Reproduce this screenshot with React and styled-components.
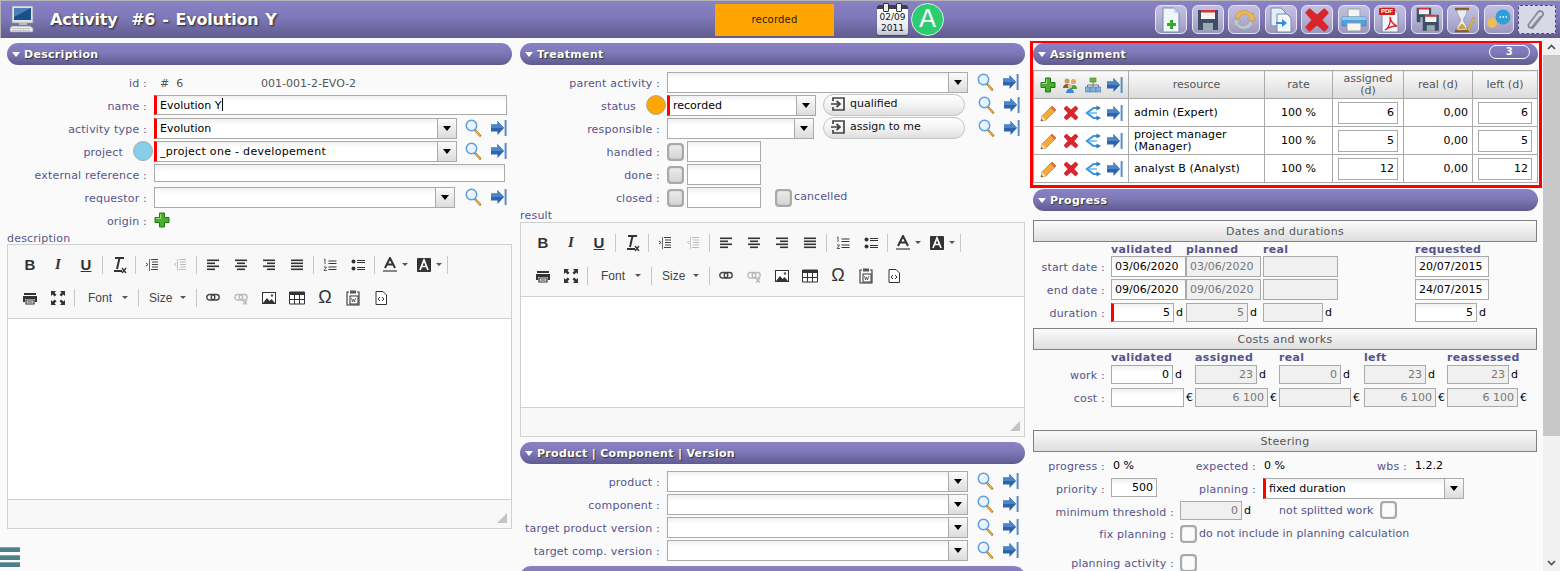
import React from "react";
import styled, { createGlobalStyle } from "styled-components";

const Global = createGlobalStyle`
  html, body { margin: 0; padding: 0; height: 100%; overflow: hidden; background: #fafafa; }
  * { box-sizing: border-box; }
  body { font-family: "DejaVu Sans", Verdana, sans-serif; font-size: 11px; color: #000; }
`;

const LABEL = "#55548a";
const BORDER = "#aaaaaa";
const purple = "linear-gradient(#8a81c6 0%, #7f78b8 45%, #5f5b8e 100%)";

const Page = styled.div`position: relative; width: 1560px; height: 571px; overflow: hidden; background: #fafafa;`;
const TopBar = styled.header`
  height: 38px; border-top: 1px solid #b5b5b5; border-left: 1px solid #b5b5b5; background: ${purple};
  display: flex; align-items: center; padding-left: 8px; position: relative;
`;
const Title = styled.h1`
  margin: 0 0 0 14px; width: 665px; color: #fff; font-size: 16px; font-weight: bold; white-space: pre;
  letter-spacing: -0.2px; word-spacing: 1.5px; text-shadow: 1px 1px 2px #222;
`;
const StatusBox = styled.div`
  width: 119px; height: 32px; background: #ffa500; color: #222; font-size: 10px;
  display: flex; align-items: center; justify-content: center; letter-spacing: .2px;
`;
const Calendar = styled.div`
  margin-left: 43px; width: 31px; height: 30px; position: relative; border-radius: 3px 3px 2px 2px; overflow: visible;
  background: linear-gradient(#fff, #e8eaf2 70%, #c0c4d0); border-top: 4px solid #3c3c4c;
  font-size: 9px; line-height: 11px; text-align: center; color: #112; padding-top: 3px; box-shadow: 0 1px 1px #444;
  &::before, &::after { content: ""; position: absolute; top: -6px; width: 4px; height: 7px; background: #eee; border: 1px solid #333; border-radius: 1px; }
  &::before { left: 6px; } &::after { right: 6px; }
`;
const Avatar = styled.div`
  margin-left: 3px; width: 33px; height: 33px; border-radius: 50%; background: #2ecc71; border: 1px solid #d8f5e4;
  color: #fff; font-size: 25px; line-height: 30px; text-align: center;
`;
const ToolRow = styled.div`margin-left: 211px; display: flex; gap: 4.5px; align-items: center;`;
const ToolButton = styled.div`
  width: ${p => p.$w || 32}px; height: 29px; border-radius: 6px; border: 1px solid #e6e6f2;
  background: linear-gradient(rgba(255,255,255,.5), rgba(255,255,255,.34));
  display: flex; align-items: center; justify-content: center;
`;
const ClipButton = styled(ToolButton)`
  border: 1px dashed #4a4a70; border-radius: 2px; background: #d9d8e6;
`;

const Main = styled.main`display: flex; height: 533px;`;
const Columns = styled.div`display: flex; gap: 8px; padding: 5px 0 0 7px; width: 1543px; align-items: flex-start;`;
const Column = styled.section`width: 505px; flex: none;`;
const Scrollbar = styled.div`
  width: 17px; height: 533px; background: #f1f1f1; display: flex; flex-direction: column; flex: none;
`;
const ScrollCap = styled.div`height: 17px; display: flex; align-items: center; justify-content: center; color: #505050; background: #f1f1f1;`;
const ScrollThumb = styled.div`height: 381px; background: #c8c8c8;`;
const ScrollTrack = styled.div`flex: 1;`;

const SectionHead = styled.div`
  height: 22px; border-radius: 11px; background: ${purple}; display: flex; align-items: center; padding: 0 8px 0 5px;
  color: #fff; font-weight: bold; font-size: 11px; letter-spacing: .3px; text-shadow: 1px 1px 1px #333; width: ${p => p.$w || 505}px;
`;
const SpacedHead = styled(SectionHead)`margin-top: ${p => p.$mt}px;`;
const Caret = styled.span`
  width: 0; height: 0; border: 4px solid transparent; border-top: 5px solid #fff; border-bottom: 0; margin: 0 4px 0 0;
`;
const Badge = styled.span`
  margin-left: auto; width: 41px; height: 14px; border: 1px solid #fff; border-radius: 7px; text-align: center;
  font-size: 10px; line-height: 11px; text-shadow: none; margin-top: -4px;
`;
const Form = styled.div`padding-top: 7px;`;
const Row = styled.div`display: flex; align-items: flex-start; height: 23px;`;
const Label = styled.div`
  width: ${p => p.$w || 140}px; flex: none; text-align: right; color: ${LABEL}; line-height: ${p => p.$lh || 23}px; white-space: nowrap; letter-spacing: .2px;
  margin-right: ${p => p.$gap ?? 7}px;
`;
const Value = styled.div`
  color: ${p => p.$muted ? "#555" : "#000"}; line-height: ${p => p.$lh || 23}px; width: ${p => p.$w}px; flex: none; white-space: pre;
  padding-left: ${p => p.$pl ?? 2}px;
`;
const OriginValue = styled.div`padding-top: 2px;`;
const Field = styled.div`
  width: ${p => p.$w}px; height: ${p => p.$h || 20}px; flex: none; border: 1px solid ${BORDER};
  border-left: ${p => p.$req ? "3px solid #f00" : `1px solid ${BORDER}`};
  background: ${p => p.$ro ? "#f0f0f0" : "linear-gradient(#f0f0f0 0, #fff 6px)"}; color: ${p => p.$ro ? "#777" : "#000"};
  padding: 0 3px; line-height: ${p => (p.$h || 20) - 1}px; text-align: ${p => p.$right ? "right" : "left"};
  white-space: nowrap; overflow: hidden; margin-left: ${p => p.$ml || 0}px;
`;
const CaretMark = styled.span`display: inline-block; width: 1px; height: 13px; background: #000; vertical-align: -2px;`;
const SelectBox = styled.div`
  width: ${p => p.$w}px; height: 21px; flex: none; display: flex; border: 1px solid ${BORDER};
  border-left: ${p => p.$req ? "3px solid #f00" : `1px solid ${BORDER}`};
  background: linear-gradient(#f0f0f0 0, #fff 6px);
`;
const SelectText = styled.div`flex: 1; padding-left: 3px; line-height: 20px; white-space: nowrap; letter-spacing: ${p => p.$ls || 0}px;`;
const SelectArrow = styled.div`
  width: 19px; border-left: 1px solid ${BORDER}; background: linear-gradient(#fbfbfb, #dcdcdc);
  display: flex; align-items: center; justify-content: center;
  &::after { content: ""; border: 4px solid transparent; border-top: 5px solid #000; border-bottom: 0; }
`;
const IconPair = styled.div`display: flex; gap: 9px; align-items: center; height: 20px; margin-left: ${p => p.$ml || 8}px; flex: none;`;
const Dot = styled.span`
  width: 20px; height: 20px; border-radius: 50%; background: ${p => p.$c}; border: 1px solid #aaa; flex: none; margin-right: 1px;
`;
const DotLabel = styled(Label)`margin-right: 10px; width: ${p => p.$w}px;`;
const Check = styled.span`
  width: 17px; height: 18px; flex: none; border: 2px solid #a9a9a9; border-radius: 4px; background: ${p => p.$light ? "#fbfbfb" : "linear-gradient(#ececec,#d4d4d4)"};
  box-shadow: inset 0 0 1px #777; margin-top: ${p => p.$mt ?? 2}px; margin-left: ${p => p.$ml || 0}px;
`;
const ChipButton = styled.div`
  width: 142px; height: 22px; flex: none; margin-left: ${p => p.$ml || 7}px; margin-top: -1px; border: 1px solid #c4c4c4; border-radius: 11px;
  background: linear-gradient(#fff, #f2f2f2 55%, #dedede); display: flex; align-items: center; gap: 4px; padding: 0 0 3px 6px; color: #111;
`;
const PlainLabel = styled.div`color: ${LABEL}; height: ${p => p.$h || 11}px; line-height: 11px; letter-spacing: .2px;`;
const Editor = styled.div`width: 505px; border: 1px solid #d1d1d1; background: #f8f8f8;`;
const EdToolbar = styled.div`height: 74px; padding: 3px 0 0 8px; border-bottom: 1px solid #d1d1d1;`;
const EdRow = styled.div`height: 33px; display: flex; align-items: center;`;
const EdBtn = styled.span`
  width: ${p => p.$w || 28}px; height: 20px; display: flex; align-items: center; justify-content: center; flex: none; color: #333;
  font-family: "Liberation Sans", Arial, sans-serif;
`;
const EdLetter = styled(EdBtn)`font-size: ${p => p.$fs || 15}px; font-weight: ${p => p.$light ? "normal" : "bold"}; font-style: ${p => p.$i ? "italic" : "normal"}; text-decoration: ${p => p.$u ? "underline" : "none"};
  font-family: ${p => p.$i ? '"Liberation Serif", serif' : '"Liberation Sans", sans-serif'};`;
const EdSep = styled.span`width: 5px; height: 18px; flex: none; display: flex; justify-content: center; &::after { content: ""; width: 1px; background: #c8c8c8; }`;
const EdCombo = styled.span`
  width: ${p => p.$w}px; flex: none; display: flex; align-items: center; justify-content: space-between; padding: 0 8px 0 ${p => p.$pl || 11}px; color: #444; font-size: 12px;
  font-family: "Liberation Sans", Arial, sans-serif;
`;
const DownTick = styled.span`width: 0; height: 0; border: 3px solid transparent; border-top: 3px solid #555; border-bottom: 0; margin-left: 2px; flex: none;`;
const ColorWrap = styled.span`display: flex; align-items: center; gap: 3px;`;
const EdBody = styled.div`height: ${p => p.$h}px; background: #fff; border-bottom: 1px solid #d1d1d1;`;
const EdFoot = styled.div`height: 28px; display: flex; justify-content: flex-end; align-items: flex-end; padding: 0 4px 5px 0;`;
const Resize = styled.span`width: 0; height: 0; border-left: 10px solid transparent; border-bottom: 10px solid #c4c4c4;`;

const Frame = styled.div`
  border: 3px solid #f00; border-top-width: 2px; width: 512px; margin: -2px 0 1px -3px;
`;
const FrameInner = styled.div`height: 142px;`;
const Grid = styled.table`
  margin-top: 5px; width: 505px; border-collapse: collapse; table-layout: fixed; border: 1px solid ${BORDER};
  th, td { border: 1px solid ${BORDER}; padding: 0; font-weight: normal; }
  th { height: 28px; background: linear-gradient(#fafafa, #dcdcdc); color: #555; line-height: 12px; padding-top: 1px; }
  td { height: 28px; background: #fff; }
`;
const IconCell = styled.div`display: flex; justify-content: space-between; align-items: center; padding: 0 5px 0 6px;`;
const NameCell = styled.div`padding-left: 5px; line-height: 12px; letter-spacing: .1px;`;
const CenterCell = styled.div`text-align: center;`;
const RightCell = styled.div`text-align: right; padding-right: 4px;`;
const CellField = styled.div`
  margin: 0 auto; width: ${p => p.$w}px; height: 22px; border: 1px solid ${BORDER}; text-align: right; padding-right: 3px; line-height: 20px;
`;
const Bar = styled.div`
  height: 22px; width: 504px; border: 1px solid #808080; background: linear-gradient(#fbfbfb, #dedede); text-align: center; color: #555; line-height: 22px;
  letter-spacing: .33px; margin-top: ${p => p.$mt || 0}px;
`;
const DataGrid = styled.div`display: grid; grid-template-columns: ${p => p.$cols}; grid-auto-rows: 23px;`;
const CapGrid = styled(DataGrid)`grid-auto-rows: ${p => p.$h}px;`;
const Cap = styled.div`color: ${LABEL}; font-weight: bold; line-height: 15px; letter-spacing: .35px;`;
const UnitWrap = styled.div`display: flex; align-items: flex-start; line-height: 19px; gap: 2px; color: #000; padding-top: ${p => p.$pt || 0}px;`;
const SteerRow = styled.div`display: flex; align-items: flex-start; height: ${p => p.$h || 23}px;`;
const SteerGap = styled.div`height: 3px;`;
const Spacer = styled.span`width: ${p => p.$w}px; height: ${p => p.$h || 0}px; flex: none; display: block;`;
const NoteText = styled.div`color: ${LABEL}; line-height: 19px; white-space: nowrap; letter-spacing: .1px; margin-left: ${p => p.$ml || 0}px;`;
const MenuToggle = styled.div`
  position: absolute; left: 0; top: 547px; width: 20px; height: 20px; display: flex; flex-direction: column; justify-content: space-between;
  span { height: 5px; background: #4f8088; border-top: 1px solid #7fa8ae; }
`;
const PdfTag = styled.span`
  position: absolute; left: 1px; top: 1px; background: #d21f26; color: #fff; font-size: 6px; font-weight: bold; line-height: 7px; padding: 0 2px; border-radius: 1px; font-family: "Liberation Sans", sans-serif;
`;
const PdfWrap = styled.span`position: relative; display: block; width: 24px; height: 26px;`;
const IconSvg = styled.svg`display: block; flex: none;`;

/* ---------- drawn icons ---------- */
const S = ({ w = 16, h = 16, vb = "0 0 16 16", children }) => <IconSvg width={w} height={h} viewBox={vb}>{children}</IconSvg>;
const Search = () => <S w={17} h={18} vb="0 0 17 18">
  <path d="M10 11l5 5.5" stroke="#b5812a" strokeWidth="2.6" strokeLinecap="round" /><path d="M10.5 11.5l4.5 5" stroke="#f2c05c" strokeWidth="1.1" />
  <circle cx="6.5" cy="6.5" r="5.2" fill="#e6f2fd" stroke="#5c9fe0" strokeWidth="1.5" /><path d="M3.5 7a3.2 3.2 0 013-3.4" fill="none" stroke="#fff" strokeWidth="1.3" />
</S>;
const GoTo = () => <S w={16} h={16}>
  <path d="M0 4.500h6.500V1l6.500 7-6.500 7v-3.500H0z" fill="#2f64ac" /><path d="M0 4.500h6.500V1l6.500 7H0z" fill="#4a86c8" /><rect x="13.6" y="0" width="2" height="16" fill="#5a8cc4" />
</S>;
const Plus = ({ size = 16 }) => <S w={size} h={size}>
  <path d="M5.5 1h5v4.5H15v5h-4.5V15h-5v-4.5H1v-5h4.5z" fill="#49ad2e" stroke="#1f7a12" /><path d="M6.5 2v4.5H2" fill="none" stroke="#9be07d" />
</S>;
const RedX = ({ size = 16 }) => <S w={size} h={size}>
  <path d="M3.500 1.500L8 5.500 12.500 1.500l2 2L10.500 8l4 4.500-2 2L8 10.500 3.500 14.500l-2-2L5.500 8l-4-4.500z" fill="#d8262c" stroke="#d8262c" strokeWidth="1.300" strokeLinejoin="round" />
</S>;
const Pencil = () => <S w={17} h={18} vb="0 0 17 18">
  <path d="M1 17l1-5L12 2l4 4L6 16z" fill="#f5a93a" stroke="#c9761a" strokeWidth=".7" /><path d="M12 2l4 4 -1.5 1.5-4-4z" fill="#e8604c" /><path d="M1 17l1-5 4 4z" fill="#f7dcae" /><path d="M1 17l.4-2 1.6 1.6z" fill="#333" />
</S>;
const Share = () => <S w={16} h={16}>
  <path d="M12 3H8.500L2 8l6.500 5H12" fill="none" stroke="#3d98e2" strokeWidth="2.200" /><path d="M4 8h8" stroke="#8cc8f4" strokeWidth="2" />
  <path d="M11.500 .5L16 3l-4.500 2.500zM11.500 10.500L16 13l-4.500 2.500z" fill="#2a7cc4" />
</S>;
const People = () => <S w={16} h={16}>
  <circle cx="5" cy="4" r="2.5" fill="#c99a5e" /><path d="M1 11c0-3 2-4 4-4s4 1 4 4z" fill="#77624a" />
  <circle cx="11.5" cy="4.5" r="2.5" fill="#d9a86c" /><path d="M8 12c0-3 1.5-4 3.5-4S15 9 15 12z" fill="#4f9a3a" />
  <circle cx="8" cy="9" r="2.3" fill="#eec08c" /><path d="M4 16c0-3 2-4.500 4-4.500S12 13 12 16z" fill="#3c88d8" />
</S>;
const OrgTree = () => <S w={16} h={16}>
  <rect x="5" y="1" width="6" height="4" fill="#6bb53c" stroke="#3e8a20" strokeWidth=".6" /><path d="M8 5v3M2.500 10V8h11v2M8 8v2" stroke="#777" fill="none" />
  <rect x="0" y="10" width="5" height="5" fill="#7fb0dc" stroke="#4a7cac" strokeWidth=".6" /><rect x="5.500" y="10" width="5" height="5" fill="#7fb0dc" stroke="#4a7cac" strokeWidth=".6" /><rect x="11" y="10" width="5" height="5" fill="#7fb0dc" stroke="#4a7cac" strokeWidth=".6" />
</S>;
const Monitor = () => <S w={27} h={29} vb="0 0 27 29">
  <path d="M3 1h21v17H3z" fill="#dfe3e6" stroke="#8c9296" strokeWidth=".7" /><rect x="5" y="3" width="17" height="12" fill="#1c4f8a" /><path d="M5 3h17L5 12z" fill="#4a82b8" />
  <rect x="10" y="18" width="8" height="2" fill="#b5bcc0" /><path d="M3 21h18l3 2v4H1v-4z" fill="#e9ecee" stroke="#8c9296" strokeWidth=".7" /><path d="M3 23.500h18M3 25.500h18" stroke="#9aa0a4" strokeWidth=".8" strokeDasharray="1 .6" />
</S>;
const ExitBox = () => <S w={16} h={16}>
  <path d="M3 5V2h11v12H3v-3" fill="none" stroke="#444" strokeWidth="1.700" /><path d="M1 8h8.500M6.500 5L10 8l-3.500 3" fill="none" stroke="#444" strokeWidth="1.700" />
</S>;

const Line = ({ d, c = "#333", sw = 1.4 }) => <path d={d} stroke={c} strokeWidth={sw} fill="none" />;
const Align = ({ kind }) => {
  const rows = { left: [12, 8, 12, 8], center: [12, 8, 12, 8], right: [12, 8, 12, 8], full: [12, 12, 12, 12] }[kind];
  return <S w={14} h={14} vb="0 0 14 14">{rows.map((w, i) => {
    const x = kind === "left" || kind === "full" ? 1 : kind === "right" ? 13 - w : 7 - w / 2;
    return <rect key={i} x={x} y={1.5 + i * 3} width={w} height={1.6} fill="#333" />;
  })}</S>;
};
const Indent = ({ off, out }) => { const c = off ? "#bbb" : "#444"; return <S w={14} h={14} vb="0 0 14 14">
  <Line d="M6 1.500h7M7 4h6M7 6.500h6M7 9h6M6 11.500h7" c={c} sw={1} /><Line d="M4.500 1v12" c={c} sw={.8} />
  <Line d={out ? "M3.500 5L1.500 6.500 3.500 8" : "M1 5l2 1.500L1 8"} c={c} sw={1} />
</S>; };
const NumList = () => <S w={14} h={14} vb="0 0 14 14"><Line d="M5.500 3h8M5.500 5.500h8M5.500 9h8M5.500 11.500h8" sw={1} /><Line d="M1 1.500l1-.5v5M1 9h2.500L1 12.500h3" sw={.8} /></S>;
const BulList = () => <S w={14} h={14} vb="0 0 14 14"><circle cx="2.500" cy="3.500" r="2" fill="#333" /><circle cx="2.500" cy="10.500" r="2" fill="#333" /><Line d="M6 2.500h8M6 4.500h8M6 9.500h8M6 11.500h8" sw={1} /></S>;
const Printer = () => <S w={14} h={14} vb="0 0 14 14"><path d="M1 2h12v2H1zM0 5h14v6h-2V8H2v3H0z" fill="#333" /><path d="M3 9h8v4H3z" fill="none" stroke="#333" strokeWidth="1.200" /><Line d="M4.500 11h5" sw={1} /></S>;
const Maximize = () => <S w={14} h={14} vb="0 0 14 14"><path d="M0 0h5L3.500 1.700 5.500 3.700 3.700 5.500 1.700 3.500 0 5zM14 0v5l-1.700-1.500-2 2-1.800-1.800 2-2L9 0zM0 14V9l1.700 1.500 2-2 1.800 1.800-2 2L5 14zM14 14H9l1.500-1.700-2-2 1.800-1.800 2 2L14 9z" fill="#333" /></S>;
const LinkIco = ({ off }) => { const c = off ? "#bbb" : "#444"; return <S w={14} h={14} vb="0 0 14 14">
  <rect x=".8" y="3.500" width="8" height="5.500" rx="2.700" fill="none" stroke={c} strokeWidth="1.400" /><rect x="5.200" y="3.500" width="8" height="5.500" rx="2.700" fill="none" stroke={c} strokeWidth="1.400" />
  {off && <path d="M9 9.500l4 4M13 9.500l-4 4" stroke={c} strokeWidth="1.400" />}
</S>; };
const ImageIco = () => <S w={14} h={14} vb="0 0 14 14"><rect x=".5" y="1.500" width="13" height="11" fill="#fff" stroke="#333" /><path d="M1 12l4-5 2.500 3 2-2 3.500 4z" fill="#333" /><circle cx="10" cy="4.500" r="1.300" fill="#555" /></S>;
const TableIco = () => <S w={16} h={14} vb="0 0 16 14"><path d="M.5 1h15v12H.5z" fill="#fff" stroke="#333" /><rect x="0" y="1" width="16" height="3" fill="#333" /><Line d="M5.500 4v9M10.500 4v9M.5 8.500h15" sw={1} /></S>;
const PasteWord = () => <S w={14} h={16} vb="0 0 14 16"><path d="M3 2H1v13h12V2h-2" fill="none" stroke="#333" strokeWidth="1.100" /><rect x="4" y=".5" width="6" height="3" fill="#555" /><rect x="4" y="6" width="8" height="8" fill="#fff" stroke="#333" /><Line d="M5.500 8l1 4 1-3 1 3 1-4" sw={.7} /></S>;
const SourceIco = () => <S w={12} h={14} vb="0 0 12 14"><path d="M1 .5h7l3.500 3.500v9.500H1z" fill="#fff" stroke="#333" /><Line d="M5 6L3 8l2 2M7 6l2 2-2 2" sw={1} /></S>;
const ClearFmt = () => <S w={18} h={18} vb="0 0 18 18"><path d="M5 2h9M9.500 2L7 13M4 15h8" stroke="#333" strokeWidth="2" fill="none" /><path d="M12 12l4 5M16 12l-4 5" stroke="#333" strokeWidth="1.300" /></S>;
const ColorA = ({ bg }) => <ColorWrap>
  {bg
    ? <S w={14} h={14} vb="0 0 14 14"><rect width="14" height="14" rx="1" fill="#333" /><path d="M3 12L7 2l4 10M4.500 8.500h5" stroke="#fff" strokeWidth="1.700" fill="none" /></S>
    : <S w={14} h={16} vb="0 0 14 16"><path d="M2 11L7 1l5 10M4 7.500h6" stroke="#333" strokeWidth="2" fill="none" /><rect x="0" y="13" width="14" height="2" fill="#888" /></S>}
  <DownTick />
</ColorWrap>;

/* top toolbar icons */
const Doc = ({ children }) => <S w={24} h={26} vb="0 0 24 26"><path d="M4 1h11l5 5v19H4z" fill="#f2f6fb" stroke="#6d8db0" /><path d="M15 1v5h5z" fill="#c9d8e8" />{children}</S>;
const Floppy = ({ x = 0, y = 0, s = 1 }) => <g transform={`translate(${x} ${y}) scale(${s})`}><path d="M1 1h20v20H1z" fill="#3f4f63" /><rect x="4" y="1" width="14" height="9" fill="#f4f4f4" /><rect x="4" y="1" width="14" height="2.500" fill="#d8323a" /><rect x="6" y="14" width="10" height="7" fill="#9aa8b6" /></g>;

const tools = [
  <Doc><path d="M11 13h3v3h3v3h-3v3h-3v-3H8v-3h3z" fill="#38a82c" /></Doc>,
  <S w={22} h={22} vb="0 0 22 22"><Floppy /></S>,
  <S w={26} h={24} vb="0 0 26 24"><path d="M4 10a9 8 0 0117-3l1-3 2 9-8-2 3-2a6 6 0 00-11 2z" fill="#eeb84c" stroke="#c98f2a" strokeWidth=".5" /><path d="M22 14a9 8 0 01-17 3l-1 3-2-9 8 2-3 2a6 6 0 0011-2z" fill="#bcc6cc" stroke="#8f9ca4" strokeWidth=".5" /></S>,
  <S w={24} h={26} vb="0 0 24 26"><path d="M2 1h10l4 4v14H2z" fill="#e7edf4" stroke="#6d8db0" /><path d="M8 7h10l4 4v14H8z" fill="#f4f7fb" stroke="#6d8db0" /><path d="M7 15h6v-3l5 4-5 4v-3H7z" fill="#2d8fe0" /></S>,
  <RedX size={26} />,
  <S w={26} h={24} vb="0 0 26 24"><path d="M7 1h12v8H7z" fill="#f4f4f4" stroke="#8aa" /><path d="M1 9h24v9H1z" fill="#4aa3dc" stroke="#2a78b0" strokeWidth=".6" /><path d="M1 9h24v3H1z" fill="#8fcbf0" /><path d="M6 15h14v8H6z" fill="#f6f6f6" stroke="#999" /></S>,
  <PdfWrap><Doc><path d="M7 23c4-2 6-8 5-13 1 5 4 8 7 9-4 0-8 1-12 4z" fill="none" stroke="#d62c2c" strokeWidth="1.400" /></Doc><PdfTag>PDF</PdfTag></PdfWrap>,
  <S w={24} h={25} vb="0 0 24 25"><Floppy x={1} y={0} s={.72} /><Floppy x={7} y={7} s={.8} /></S>,
  <S w={24} h={26} vb="0 0 24 26"><path d="M4 2h14M4 24h14" stroke="#8a5a24" strokeWidth="2.400" /><path d="M6 3h10c0 6-3.500 7-3.500 10s3.500 4 3.500 10H6c0-6 3.500-7 3.500-10S6 9 6 3z" fill="#e7eef2" stroke="#888" strokeWidth=".6" /><path d="M7 22c1-3 3-5 4-5s3 2 4 5z" fill="#cfa24a" /><path d="M17 23l5-13 1.500.6-5 13-2 1z" fill="#f2c636" stroke="#a37c12" strokeWidth=".4" /></S>,
  <S w={25} h={22} vb="0 0 25 22"><circle cx="17" cy="8" r="7.500" fill="#2f9fd8" /><circle cx="6" cy="14" r="5" fill="#edbe58" /><path d="M13.500 8h1.500M16.500 8h1.500M19.500 8h1.500" stroke="#fff" strokeWidth="1.600" /></S>,
];

const EditorBlock = ({ h }) => (
  <Editor>
    <EdToolbar>
      <EdRow>
        <EdLetter>B</EdLetter><EdLetter $i>I</EdLetter><EdLetter $u>U</EdLetter><EdSep />
        <EdBtn><ClearFmt /></EdBtn><EdSep />
        <EdBtn><Indent /></EdBtn><EdBtn><Indent off out /></EdBtn><EdSep />
        <EdBtn><Align kind="left" /></EdBtn><EdBtn><Align kind="center" /></EdBtn><EdBtn><Align kind="right" /></EdBtn><EdBtn><Align kind="full" /></EdBtn><EdSep />
        <EdBtn><NumList /></EdBtn><EdBtn><BulList /></EdBtn><EdSep />
        <EdBtn $w={36}><ColorA /></EdBtn><EdBtn $w={32}><ColorA bg /></EdBtn><EdSep />
      </EdRow>
      <EdRow>
        <EdBtn><Printer /></EdBtn><EdBtn><Maximize /></EdBtn><EdSep />
        <EdCombo $w={59}>Font<DownTick /></EdCombo><EdSep />
        <EdCombo $w={53} $pl={8}>Size<DownTick /></EdCombo><EdSep />
        <EdBtn><LinkIco /></EdBtn><EdBtn><LinkIco off /></EdBtn><EdBtn><ImageIco /></EdBtn><EdBtn><TableIco /></EdBtn>
        <EdLetter $fs={18} $light>Ω</EdLetter><EdBtn><PasteWord /></EdBtn><EdBtn><SourceIco /></EdBtn>
      </EdRow>
    </EdToolbar>
    <EdBody $h={h} />
    <EdFoot><Resize /></EdFoot>
  </Editor>
);

const Pair = ({ ml }) => <IconPair $ml={ml}><Search /><GoTo /></IconPair>;
const SelectRow = ({ label, w = 301, ml = 9 }) => (
  <Row>
    <Label>{label} :</Label>
    <SelectBox $w={w}><SelectText /><SelectArrow /></SelectBox>
    <Pair ml={ml} />
  </Row>
);

const assignments = [
  { name: "admin (Expert)", a: 6 },
  { name: <>project manager<br />(Manager)</>, a: 5 },
  { name: "analyst B (Analyst)", a: 12 },
];

const NumU = ({ v, w, ro, req, u = "d" }) => <UnitWrap $pt={1}><Field $w={w} $h={19} $ro={ro} $req={req} $right>{v}</Field>{u}</UnitWrap>;
const D = ({ v, w = 75, ro }) => <Field $w={w} $h={21} $ro={ro}>{v}</Field>;

export default function App() {
  return (
    <Page>
      <Global />
      <TopBar>
        <Monitor />
        <Title>{"Activity  #6 - Evolution Y"}</Title>
        <StatusBox>recorded</StatusBox>
        <Calendar>02/09<br />2011</Calendar>
        <Avatar>A</Avatar>
        <ToolRow>
          {tools.map((t, i) => <ToolButton key={i} $w={i === 9 ? 30 : 32}>{t}</ToolButton>)}
          <ClipButton $w={38}>
            <S w={22} h={24} vb="0 0 22 24"><path d="M6 20L17 6a3 3 0 00-5-3L3 15a2 2 0 003 3l9-11" transform="translate(0 1)" fill="none" stroke="#8a8a96" strokeWidth="1.800" /></S>
          </ClipButton>
        </ToolRow>
      </TopBar>
      <Main>
        <Columns>
          <Column>
            <SectionHead><Caret />Description</SectionHead>
            <Form>
              <Row><Label>id :</Label><Value $w={107} $muted $pl={6}>{"#  6"}</Value><Value $muted $pl={0}>001-001-2-EVO-2</Value></Row>
              <Row><Label>name :</Label><Field $w={353} $req>Evolution Y<CaretMark /></Field></Row>
              <Row><Label>activity type :</Label><SelectBox $w={303} $req><SelectText>Evolution</SelectText><SelectArrow /></SelectBox><Pair /></Row>
              <Row><DotLabel $w={116}>project</DotLabel><Dot $c="#87ceeb" /><SelectBox $w={303} $req><SelectText $ls={.3}>_project one - developement</SelectText><SelectArrow /></SelectBox><Pair /></Row>
              <Row><Label>external reference :</Label><Field $w={351} $h={18} /></Row>
              <Row><Label>requestor :</Label><SelectBox $w={301}><SelectText /><SelectArrow /></SelectBox><Pair ml={10} /></Row>
              <Row><Label>origin :</Label><OriginValue><Plus /></OriginValue></Row>
              <PlainLabel>description</PlainLabel>
              <EditorBlock h={181} />
            </Form>
          </Column>
          <Column>
            <SectionHead><Caret />Treatment</SectionHead>
            <Form>
              <SelectRow label="parent activity" />
              <Row>
                <DotLabel $w={116}>status</DotLabel><Dot $c="#ffa500" />
                <SelectBox $w={149} $req><SelectText>recorded</SelectText><SelectArrow /></SelectBox>
                <ChipButton><ExitBox />qualified</ChipButton><Pair ml={13} />
              </Row>
              <Row>
                <Label>responsible :</Label>
                <SelectBox $w={147}><SelectText /><SelectArrow /></SelectBox>
                <ChipButton $ml={9}><ExitBox />assign to me</ChipButton><Pair ml={13} />
              </Row>
              <Row><Label>handled :</Label><Check /><Field $w={74} $h={21} $ml={3} /></Row>
              <Row><Label>done :</Label><Check /><Field $w={74} $h={21} $ml={3} /></Row>
              <Row><Label>closed :</Label><Check /><Field $w={74} $h={21} $ml={3} /><Check $ml={14} /><NoteText $ml={2}>cancelled</NoteText></Row>
              <PlainLabel $h={12}>result</PlainLabel>
              <EditorBlock h={111} />
              <SpacedHead $mt={5}><Caret />Product | Component | Version</SpacedHead>
              <Spacer $w={1} $h={7} />
              <SelectRow label="product" />
              <SelectRow label="component" />
              <SelectRow label="target product version" />
              <SelectRow label="target comp. version" />
              <SpacedHead $mt={3} />
            </Form>
          </Column>
          <Column>
            <Frame>
              <FrameInner>
                <SectionHead><Caret />Assignment<Badge>3</Badge></SectionHead>
                <Grid>
                  <colgroup><col width="95" /><col width="136" /><col width="68" /><col width="71" /><col width="69" /><col width="65" /></colgroup>
                  <thead><tr>
                    <th><IconCell><Plus /><People /><OrgTree /><GoTo /></IconCell></th>
                    <th>resource</th><th>rate</th><th>assigned<br />(d)</th><th>real (d)</th><th>left (d)</th>
                  </tr></thead>
                  <tbody>
                    {assignments.map((r, i) => (
                      <tr key={i}>
                        <td><IconCell><Pencil /><RedX /><Share /><GoTo /></IconCell></td>
                        <td><NameCell>{r.name}</NameCell></td>
                        <td><CenterCell>100 %</CenterCell></td>
                        <td><CellField $w={60}>{r.a}</CellField></td>
                        <td><RightCell>0,00</RightCell></td>
                        <td><CellField $w={54}>{r.a}</CellField></td>
                      </tr>
                    ))}
                  </tbody>
                </Grid>
              </FrameInner>
            </Frame>
            <SectionHead><Caret />Progress</SectionHead>
            <Bar $mt={9}>Dates and durations</Bar>
            <CapGrid $cols="78px 75px 77px 152px 1fr" $h={14}>
              <span /><Cap>validated</Cap><Cap>planned</Cap><Cap>real</Cap><Cap>requested</Cap>
            </CapGrid>
            <DataGrid $cols="78px 75px 77px 152px 1fr">
              <Label $w={72} $gap={6}>start date :</Label><D v="03/06/2020" /><D v="03/06/2020" ro /><D w={75} ro /><D v="20/07/2015" w={74} />
              <Label $w={72} $gap={6}>end date :</Label><D v="09/06/2020" /><D v="09/06/2020" ro /><D w={75} ro /><D v="24/07/2015" w={74} />
              <Label $w={72} $gap={6}>duration :</Label><NumU v="5" w={63} req /><NumU v="5" w={62} ro /><NumU w={60} ro /><NumU v="5" w={62} />
            </DataGrid>
            <Bar $mt={3}>Costs and works</Bar>
            <CapGrid $cols="78px 84px 84px 85px 83px 1fr" $h={14}>
              <span /><Cap>validated</Cap><Cap>assigned</Cap><Cap>real</Cap><Cap>left</Cap><Cap>reassessed</Cap>
            </CapGrid>
            <DataGrid $cols="78px 84px 84px 85px 83px 1fr">
              <Label $w={72} $gap={6}>work :</Label><NumU v="0" w={62} /><NumU v="23" w={62} ro /><NumU v="0" w={62} ro /><NumU v="23" w={62} ro /><NumU v="23" w={62} ro />
              <Label $w={72} $gap={6}>cost :</Label><NumU u="€" w={73} /><NumU u="€" v="6 100" w={73} ro /><NumU u="€" w={72} ro /><NumU u="€" v="6 100" w={72} ro /><NumU u="€" v="6 100" w={71} ro />
            </DataGrid>
            <Bar $mt={20}>Steering</Bar>
            <SteerGap />
            <SteerRow>
              <Label $w={72} $gap={6}>progress :</Label><Value $w={79} $lh={21}>0 %</Value>
              <Label $w={66} $gap={6}>expected :</Label><Value $w={78} $lh={21}>0 %</Value>
              <Label $w={67} $gap={6}>wbs :</Label><Value $lh={21}>1.2.2</Value>
            </SteerRow>
            <SteerRow>
              <Label $w={72} $gap={6}>priority :</Label><Field $w={46} $h={19} $right>500</Field><Spacer $w={33} />
              <Label $w={66} $gap={7}>planning :</Label><SelectBox $w={201} $req><SelectText>fixed duration</SelectText><SelectArrow /></SelectBox>
            </SteerRow>
            <SteerRow>
              <Label $w={141} $gap={6}>minimum threshold :</Label><UnitWrap><Field $w={62} $h={19} $ro $right>0</Field>d</UnitWrap>
              <NoteText $ml={28}>not splitted work</NoteText><Check $mt={0} $light $ml={6} />
            </SteerRow>
            <SteerRow $h={29}>
              <Label $w={141} $gap={6} $lh={21}>fix planning :</Label><Check $mt={1} $light /><NoteText $ml={2}>do not include in planning calculation</NoteText>
            </SteerRow>
            <SteerRow>
              <Label $w={141} $gap={6} $lh={21}>planning activity :</Label><Check $mt={1} $light />
            </SteerRow>
          </Column>
        </Columns>
        <Scrollbar>
          <ScrollCap><S w={9} h={6} vb="0 0 9 6"><path d="M1 5l3.500-3.500L8 5" fill="none" stroke="#505050" strokeWidth="1.600" /></S></ScrollCap>
          <ScrollThumb />
          <ScrollTrack />
          <ScrollCap><S w={9} h={6} vb="0 0 9 6"><path d="M1 1l3.500 3.500L8 1" fill="none" stroke="#505050" strokeWidth="1.600" /></S></ScrollCap>
        </Scrollbar>
      </Main>
      <MenuToggle><span /><span /><span /></MenuToggle>
    </Page>
  );
}
